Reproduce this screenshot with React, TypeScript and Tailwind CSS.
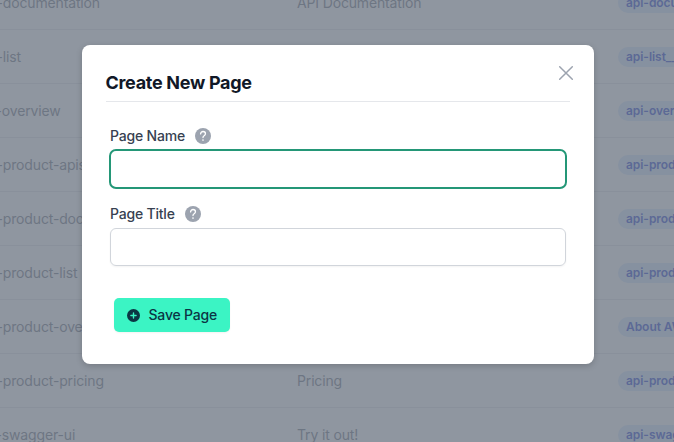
const rows = [
  { name: '-documentation', title: 'API Documentation', tag: 'api-documentation' },
  { name: '-list', title: '', tag: 'api-list__main' },
  { name: '-overview', title: '', tag: 'api-overview' },
  { name: '-product-apis', title: '', tag: 'api-product-apis' },
  { name: '-product-doc', title: '', tag: 'api-product-docs' },
  { name: '-product-list', title: '', tag: 'api-product-list' },
  { name: '-product-ove', title: '', tag: 'About AWS' },
  { name: '-product-pricing', title: 'Pricing', tag: 'api-product-pricing' },
  { name: '-swagger-ui', title: 'Try it out!', tag: 'api-swagger-ui' },
];

function HelpIcon() {
  return (
    <svg viewBox="0 0 16 16" className="h-4 w-4" fill="none">
      <circle cx="8" cy="8" r="8" fill="#9ca3af" />
      <path d="M5.6 5.9C5.6 4.4 6.7 3.5 8.05 3.5s2.4.9 2.4 2.2c0 1.1-.7 1.6-1.35 2.1-.7.5-1.1.85-1.1 1.75" stroke="#fff" strokeWidth="1.3" strokeLinecap="round" />
      <circle cx="8" cy="12" r="0.85" fill="#fff" />
    </svg>
  );
}

function Field({ label, active }: { label: string; active?: boolean }) {
  return (
    <div>
      <div className="flex h-5 items-center gap-[10px]">
        <label className="text-sm leading-5 font-medium tracking-[-0.2px] text-[#374151]">{label}</label>
        <HelpIcon />
      </div>
      <div className="mt-1 flow-root h-[38px]">
        <input
          className={
            active
              ? '-mx-px -mt-px block h-10 w-[458px] rounded-[7px] border-2 border-[#249777] px-3 outline-none'
              : 'block h-[38px] w-full rounded-md border border-[#d1d5db] px-3 shadow-xs outline-none'
          }
        />
      </div>
    </div>
  );
}

export default function App() {
  return (
    <div className="relative h-[442px] w-[674px] overflow-hidden bg-white font-['Inter',sans-serif]">
      <div className="-mt-6">
        {rows.map((row) => (
          <div key={row.tag} className="flex h-[54px] items-center border-b border-gray-200 text-sm tracking-[-0.15px] whitespace-nowrap text-[#7a808c]">
            <div className={row.name === '-overview' || row.name === '-swagger-ui' ? '-ml-[4.5px] w-[301.5px] shrink-0' : '-ml-[3.5px] w-[300.5px] shrink-0'}>{row.name}</div>
            <div className="w-[321px] shrink-0">{row.title}</div>
            <span className="shrink-0 rounded-full bg-[#dbeafe] px-2 text-xs leading-5 font-semibold tracking-[-0.05px] text-[#344ed4]">{row.tag}</span>
          </div>
        ))}
      </div>
      <div className="absolute inset-0 flex items-start justify-center bg-[#6a7380]/75 pt-[45px] pl-0.5">
        <div className="h-[319px] w-[512px] rounded-lg bg-white px-6 pt-6 shadow-[0_2px_6px_rgba(0,0,0,0.18)]">
          <div className="relative flex h-[33px] items-start border-b border-[#e5e7eb] pt-[2px]">
            <h3 className="-ml-[0.5px] text-lg leading-6 font-bold tracking-[-0.3px] text-[#111827]">Create New Page</h3>
            <button className="absolute -top-2 -right-2 text-[#9ca3af]" aria-label="Close">
              <svg viewBox="0 0 24 24" className="h-6 w-6" fill="none" stroke="currentColor" strokeWidth="1.5" strokeLinecap="round">
                <path d="M5.7 5.7l12.6 12.6M18.3 5.7l-12.6 12.6" />
              </svg>
            </button>
          </div>
          <div className="flex flex-col gap-4 px-1 pt-6">
            <Field label="Page Name" active />
            <Field label="Page Title" />
          </div>
          <button className="mt-8 ml-2 flex h-[34px] w-[116px] items-center rounded-[5px] bg-[#3bf4c4] pl-[12.5px] text-sm font-medium tracking-[-0.18px] text-[#0b3544] shadow-xs">
            <svg viewBox="0 0 14 14" className="mr-[9px] h-[13px] w-[13px]">
              <circle cx="7" cy="7" r="7" fill="currentColor" />
              <path d="M7 4.2v5.6M4.2 7h5.6" stroke="#3bf4c4" strokeWidth="1.5" strokeLinecap="round" />
            </svg>
            Save Page
          </button>
        </div>
      </div>
    </div>
  );
}
